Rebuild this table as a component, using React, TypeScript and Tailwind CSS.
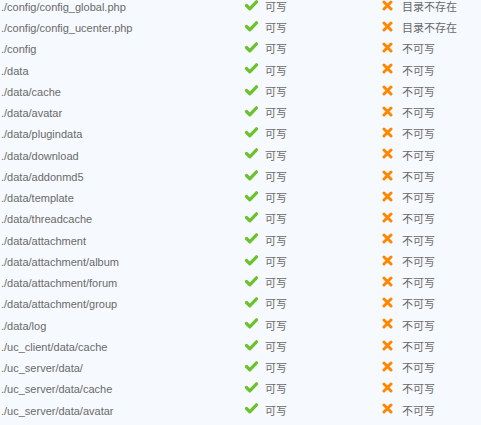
import React from 'react';

type Row = { path: string; need: string; current: string };

const rows: Row[] = [
  { path: './config/config_global.php', need: '可写', current: '目录不存在' },
  { path: './config/config_ucenter.php', need: '可写', current: '目录不存在' },
  { path: './config', need: '可写', current: '不可写' },
  { path: './data', need: '可写', current: '不可写' },
  { path: './data/cache', need: '可写', current: '不可写' },
  { path: './data/avatar', need: '可写', current: '不可写' },
  { path: './data/plugindata', need: '可写', current: '不可写' },
  { path: './data/download', need: '可写', current: '不可写' },
  { path: './data/addonmd5', need: '可写', current: '不可写' },
  { path: './data/template', need: '可写', current: '不可写' },
  { path: './data/threadcache', need: '可写', current: '不可写' },
  { path: './data/attachment', need: '可写', current: '不可写' },
  { path: './data/attachment/album', need: '可写', current: '不可写' },
  { path: './data/attachment/forum', need: '可写', current: '不可写' },
  { path: './data/attachment/group', need: '可写', current: '不可写' },
  { path: './data/log', need: '可写', current: '不可写' },
  { path: './uc_client/data/cache', need: '可写', current: '不可写' },
  { path: './uc_server/data/', need: '可写', current: '不可写' },
  { path: './uc_server/data/cache', need: '可写', current: '不可写' },
  { path: './uc_server/data/avatar', need: '可写', current: '不可写' },
];

// green tick, like the installer sprite
function Tick() {
  return (
    <svg width="13" height="11" viewBox="0 0 13 11" className="shrink-0 -translate-y-[2px]">
      <path d="M1.5 5.5 L4.8 8.8 L11.5 1.8" fill="none" stroke="#6cc22c" strokeWidth="3.2" strokeLinecap="round" strokeLinejoin="round" />
    </svg>
  );
}

// orange cross
function Cross() {
  return (
    <svg width="11" height="11" viewBox="0 0 11 11" className="shrink-0 -translate-y-[2px]">
      <path d="M2 2 L9 9 M9 2 L2 9" fill="none" stroke="#ff8700" strokeWidth="3" strokeLinecap="round" />
    </svg>
  );
}

export default function App() {
  return (
    <div className="w-[481px] h-[425px] overflow-hidden bg-[#f6f9fd] text-[11px] text-[#6a6a6a] font-['Liberation_Sans','Noto_Sans_CJK_SC',sans-serif]">
      <div className="-mt-[3.5px]">
        {rows.map((row) => (
          <div key={row.path} className="grid grid-cols-[245px_137px_1fr] h-[21.25px] items-center">
            <span className="pl-[1px] whitespace-nowrap">{row.path}</span>
            <span className="flex items-center gap-[7px]">
              <Tick />
              <span>{row.need}</span>
            </span>
            <span className="flex items-center gap-[9px]">
              <Cross />
              <span>{row.current}</span>
            </span>
          </div>
        ))}
      </div>
    </div>
  );
}
